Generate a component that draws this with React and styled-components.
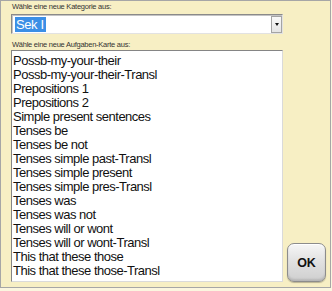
import React from "react";
import styled, { createGlobalStyle } from "styled-components";

const GlobalStyle = createGlobalStyle`
  html, body {
    margin: 0;
    padding: 0;
    background: #fbf6df;
    font-family: "Liberation Sans", Arial, sans-serif;
  }
`;

const Frame = styled.div`
  width: 331px;
  height: 288px;
  box-sizing: border-box;
  border: 1px solid #a6a6a6;
  background: #f7efc4;
  padding: 1px 0 0 10px;
  display: flex;
  flex-direction: column;
`;

const Label = styled.div`
  font-size: 7.5px;
  letter-spacing: -0.25px;
  line-height: 10px;
  height: 10px;
  color: #333;
  padding-left: 1px;
  margin-top: ${(p) => p.$top || 0}px;
`;

const SelectBox = styled.div`
  width: 272px;
  height: 20px;
  box-sizing: border-box;
  margin-top: 2px;
  background: #fff;
  border-style: solid;
  border-width: 1px;
  border-color: #8a8a8a #e2e2e2 #e2e2e2 #8a8a8a;
  box-shadow: inset 1px 1px 0 #c4c4c4;
  display: flex;
  align-items: center;
  padding-left: 3px;
`;

const Selected = styled.span`
  background: #3b8fe6;
  color: #fff;
  font-size: 13px;
  letter-spacing: -0.4px;
  line-height: 15px;
  padding: 0 2px 0 1px;
`;

const DropButton = styled.div`
  margin-left: auto;
  width: 11px;
  height: 17px;
  box-sizing: border-box;
  border: 1px solid #a4a4a4;
  background: linear-gradient(#fafafa, #e4e4e4);
  display: flex;
  align-items: center;
  justify-content: center;

  &::after {
    content: "";
    border-left: 2.5px solid transparent;
    border-right: 2.5px solid transparent;
    border-top: 3px solid #111;
  }
`;

const Row = styled.div`
  display: flex;
  align-items: flex-end;
  gap: 4px;
`;

const ListBox = styled.div`
  width: 272px;
  height: 232px;
  box-sizing: border-box;
  background: #fff;
  border-style: solid;
  border-width: 1px;
  border-color: #858585 #dadada #dadada #858585;
  padding: 3px 0 0 1px;
  overflow: hidden;
`;

const Item = styled.div`
  font-size: 13px;
  letter-spacing: -0.5px;
  line-height: 14px;
  height: 14px;
  color: #111;
  white-space: nowrap;
`;

const OkButton = styled.button`
  width: 39px;
  height: 39px;
  box-sizing: border-box;
  border: 1px solid #8c8c8c;
  border-radius: 7px;
  background: linear-gradient(#f6f6f6 0%, #e2e2e2 45%, #cfcfcf 100%);
  box-shadow: inset 0 1px 0 #ffffff, inset 0 -2px 2px rgba(0, 0, 0, 0.12),
    0 1px 1px rgba(0, 0, 0, 0.25);
  font-family: "Liberation Sans", Arial, sans-serif;
  font-weight: bold;
  font-size: 12.5px;
  color: #111;
  padding: 0;
  cursor: pointer;
`;

const cards = [
  "Possb-my-your-their",
  "Possb-my-your-their-Transl",
  "Prepositions 1",
  "Prepositions 2",
  "Simple present sentences",
  "Tenses be",
  "Tenses be not",
  "Tenses simple past-Transl",
  "Tenses simple present",
  "Tenses simple pres-Transl",
  "Tenses was",
  "Tenses was not",
  "Tenses will or wont",
  "Tenses will or wont-Transl",
  "This that these those",
  "This that these those-Transl",
];

const App = () => {
  return (
    <>
      <GlobalStyle />
      <Frame>
        <Label>Wähle eine neue Kategorie aus:</Label>
        <SelectBox>
          <Selected>Sek I</Selected>
          <DropButton />
        </SelectBox>
        <Label $top={6}>Wähle eine neue Aufgaben-Karte aus:</Label>
        <Row>
          <ListBox>
            {cards.map((c) => (
              <Item key={c}>{c}</Item>
            ))}
          </ListBox>
          <OkButton>OK</OkButton>
        </Row>
      </Frame>
    </>
  );
};

export default App;
